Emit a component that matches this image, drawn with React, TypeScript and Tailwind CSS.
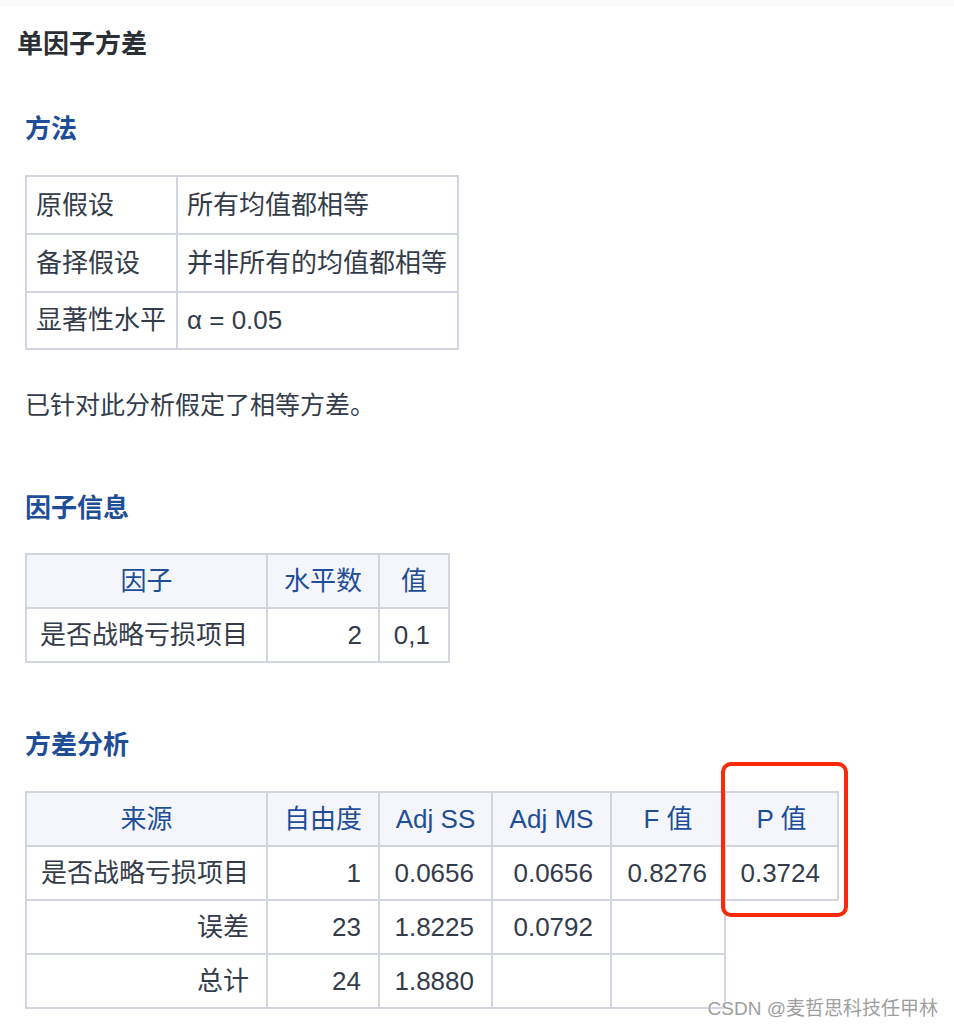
import React from 'react'

const border = 'border-[#d1d5e0]'

function Cell({
  children,
  align = 'right',
  head = false,
  h = 'h-[54px]',
  empty = false,
}: {
  children?: React.ReactNode
  align?: 'left' | 'center' | 'right'
  head?: boolean
  h?: string
  empty?: boolean
}) {
  if (empty) return <div className={h} />
  const justify =
    align === 'left' ? 'justify-start' : align === 'center' ? 'justify-center' : 'justify-end'
  return (
    <div
      className={`${h} flex items-center ${justify} border-r-2 border-b-2 ${border} ${
        head ? 'bg-[#f4f6fb] text-[#1f4e98]' : 'text-[#343c4a]'
      } whitespace-nowrap`}
    >
      {children}
    </div>
  )
}

function Heading({ children, className = '' }: { children: React.ReactNode; className?: string }) {
  return (
    <div className={`text-[26px] leading-[36px] font-bold text-[#1f4e98] ${className}`}>{children}</div>
  )
}

export default function App() {
  return (
    <div className="relative min-h-[1028px] bg-white font-['Liberation_Sans','Noto_Sans_CJK_SC',sans-serif] text-[26px] text-[#343c4a]">
      <div className="h-[7px] bg-[#fafafa]" />

      <div className="pl-[17px] mt-[19px] text-[26px] leading-[36px] font-bold text-[#2a2e35]">单因子方差</div>

      <div className="pl-[25px]">
        {/* 方法 */}
        <Heading className="mt-[49px]">方法</Heading>
        <div className={`mt-[28px] w-fit grid grid-cols-[151px_281px] border-l-2 border-t-2 ${border}`}>
          {[
            ['原假设', '所有均值都相等'],
            ['备择假设', '并非所有的均值都相等'],
            ['显著性水平', 'α = 0.05'],
          ].map(([k, v], i) => (
            <React.Fragment key={k}>
              <Cell align="left" h={i === 2 ? 'h-[57px]' : 'h-[58px]'}>
                <span className="pl-[9px]">{k}</span>
              </Cell>
              <Cell align="left" h={i === 2 ? 'h-[57px]' : 'h-[58px]'}>
                <span className="pl-[9px]">{v}</span>
              </Cell>
            </React.Fragment>
          ))}
        </div>

        <div className="mt-[37px] text-[25px] leading-[36px]">已针对此分析假定了相等方差。</div>

        {/* 因子信息 */}
        <Heading className="mt-[67px]">因子信息</Heading>
        <div className={`mt-[27px] w-fit grid grid-cols-[241px_112px_70px] border-l-2 border-t-2 ${border}`}>
          <Cell head align="center">因子</Cell>
          <Cell head align="center">水平数</Cell>
          <Cell head align="center">值</Cell>
          <Cell>
            <span className="pr-[18px]">是否战略亏损项目</span>
          </Cell>
          <Cell>
            <span className="pr-4">2</span>
          </Cell>
          <Cell>
            <span className="pr-[18px]">0,1</span>
          </Cell>
        </div>

        {/* 方差分析 */}
        <Heading className="mt-[64px]">方差分析</Heading>
        <div className="relative mt-[28px] w-fit">
          <div
            className={`grid grid-cols-[241px_112px_113px_119px_114px_113px] border-l-2 border-t-2 ${border}`}
          >
            {['来源', '自由度', 'Adj SS', 'Adj MS', 'F 值', 'P 值'].map((t) => (
              <Cell key={t} head align="center">
                {t}
              </Cell>
            ))}
            {[
              ['是否战略亏损项目', '1', '0.0656', '0.0656', '0.8276', '0.3724'],
              ['误差', '23', '1.8225', '0.0792', '', null],
              ['总计', '24', '1.8880', '', '', null],
            ].map((row, r) => (
              <React.Fragment key={r}>
                {row.map((v, c) =>
                  v === null ? (
                    <Cell key={c} empty />
                  ) : (
                    <Cell key={c}>
                      <span className="pr-[17px]">{v}</span>
                    </Cell>
                  )
                )}
              </React.Fragment>
            ))}
          </div>

          {/* highlight round the P column */}
          <div className="absolute left-[696px] top-[-29px] w-[127px] h-[155px] border-4 border-[#fa2a0a] rounded-[10px] pointer-events-none" />
        </div>
      </div>

      <div className="absolute right-[16px] top-[995px] text-[19px] leading-[28px] text-[#9e9e9e] [text-shadow:0_0_2px_#fff,0_0_2px_#fff]">
        CSDN @麦哲思科技任甲林
      </div>
    </div>
  )
}
